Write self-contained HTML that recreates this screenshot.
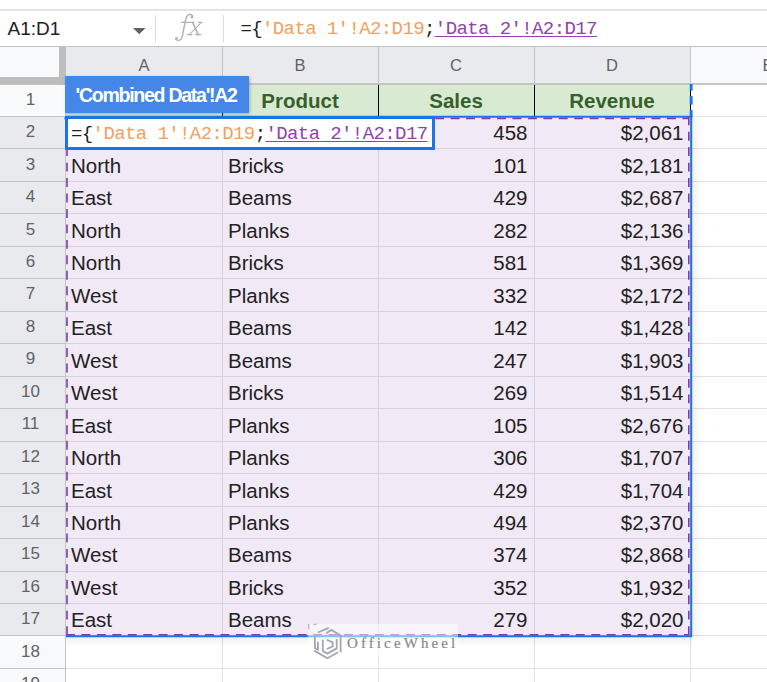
<!DOCTYPE html>
<html><head><meta charset="utf-8"><style>
html,body{margin:0;padding:0;width:767px;height:682px;overflow:hidden;background:#fff}
body>div,body>svg{position:absolute}
.t{position:absolute;height:0;line-height:0;white-space:pre;font-family:"Liberation Sans",sans-serif;color:#000}
.t>span{position:absolute;left:0;bottom:-0.2285em;line-height:normal;display:block}
.mono>span{bottom:-0.3em}
.fx>span,.wm>span{bottom:-0.237em}
.nb{font-size:19px;color:#202124}
.fx{font-family:"Liberation Serif",serif;font-size:31px;color:#b0b3b8}
.mono{font-family:"Liberation Mono",monospace;font-size:19px;letter-spacing:-0.6px;color:#202124}
.o{color:#f5a05a}
.p{color:#8e44ad;text-decoration:underline;text-decoration-thickness:1.3px;text-underline-offset:2px}
.ch{font-size:16.5px;color:#5f6368}
.ch>span,.rh>span,.ctr>span{transform:translateX(-50%)}
.rh{font-size:17px;color:#5f6368}
.hd{font-size:20.5px;font-weight:bold;color:#36602a}
.cell{font-size:20.5px;color:#222}
.rt>span{left:auto;right:0}
.tip{font-size:19.5px;font-weight:bold;color:#fff;letter-spacing:-1.25px}
.wm{font-family:"Liberation Serif",serif;font-size:15px;color:#878b93;letter-spacing:3.1px;-webkit-text-stroke:0.2px #878b93}
</style></head><body>
<div style="left:0px;top:9px;width:767px;height:2px;background:#e3e4e6"></div>
<div style="left:0px;top:46px;width:767px;height:1.5px;background:#c2c2c2"></div>
<div class="t nb" style="left:7.5px;top:36px;"><span>A1:D1</span></div>
<svg style="left:133px;top:28px" width="13" height="7" viewBox="0 0 13 7"><path d="M0 0H12.5L6.25 6.2Z" fill="#5f6368"/></svg>
<div style="left:155px;top:15px;width:1px;height:27px;background:#dadce0"></div>
<svg style="left:170px;top:10px" width="36" height="34" viewBox="170 10 36 34"><g fill="none" stroke="#b3b3b3" stroke-linecap="round"><path d="M192.6 17.4C192.8 15.3 191.6 14.4 190 14.5C187.6 14.7 186.3 16.6 185.7 19.5L182.3 36.2C181.7 39 180.3 40.4 178.3 40.4C176.6 40.4 175.7 39.5 175.8 38.2" stroke-width="1.5"/><path d="M181.2 22.3H193.6M198.3 22.3H202.2M187.3 34.7H191.8M195.3 34.7H200.8" stroke-width="1.2"/><path d="M192.6 22.4L198.3 34.7" stroke-width="1.7"/><path d="M201.2 22.6L189.3 34.6" stroke-width="1.1"/><circle cx="191.8" cy="17.2" r="1.2" fill="#b3b3b3" stroke="none"/><circle cx="176.6" cy="38.3" r="1.2" fill="#b3b3b3" stroke="none"/></g></svg>
<div style="left:223px;top:15px;width:1px;height:27px;background:#dadce0"></div>
<div class="t mono" style="left:240.4px;top:34.8px;"><span>={<span class="o">'Data 1'!A2:D19</span>;<span class="p">'Data 2'!A2:D17</span></span></div>
<div style="left:0px;top:47px;width:767px;height:37px;background:#f8f9fa"></div>
<div style="left:66px;top:47px;width:624px;height:37px;background:#e8eaed"></div>
<div style="left:0px;top:84.0px;width:66px;height:33.47px;background:#f8f9fa"></div>
<div style="left:0px;top:116.47px;width:66px;height:33.47px;background:#e8eaed"></div>
<div style="left:0px;top:148.94px;width:66px;height:33.47px;background:#e8eaed"></div>
<div style="left:0px;top:181.41px;width:66px;height:33.47px;background:#e8eaed"></div>
<div style="left:0px;top:213.88px;width:66px;height:33.47px;background:#e8eaed"></div>
<div style="left:0px;top:246.35px;width:66px;height:33.47px;background:#e8eaed"></div>
<div style="left:0px;top:278.82px;width:66px;height:33.47px;background:#e8eaed"></div>
<div style="left:0px;top:311.28999999999996px;width:66px;height:33.47px;background:#e8eaed"></div>
<div style="left:0px;top:343.76px;width:66px;height:33.47px;background:#e8eaed"></div>
<div style="left:0px;top:376.23px;width:66px;height:33.47px;background:#e8eaed"></div>
<div style="left:0px;top:408.7px;width:66px;height:33.47px;background:#e8eaed"></div>
<div style="left:0px;top:441.16999999999996px;width:66px;height:33.47px;background:#e8eaed"></div>
<div style="left:0px;top:473.64px;width:66px;height:33.47px;background:#e8eaed"></div>
<div style="left:0px;top:506.11px;width:66px;height:33.47px;background:#e8eaed"></div>
<div style="left:0px;top:538.5799999999999px;width:66px;height:33.47px;background:#e8eaed"></div>
<div style="left:0px;top:571.05px;width:66px;height:33.47px;background:#e8eaed"></div>
<div style="left:0px;top:603.52px;width:66px;height:33.47px;background:#e8eaed"></div>
<div style="left:0px;top:635.99px;width:66px;height:33.47px;background:#f8f9fa"></div>
<div style="left:0px;top:668.46px;width:66px;height:33.47px;background:#f8f9fa"></div>
<div style="left:66px;top:84px;width:624px;height:32.47px;background:#d9ead3"></div>
<div style="left:66px;top:116.47px;width:624px;height:519.52px;background:#f1e9f6"></div>
<div style="left:66px;top:116px;width:624px;height:1px;background:#d8d2de"></div>
<div style="left:690px;top:116px;width:77px;height:1px;background:#e2e2e2"></div>
<div style="left:66px;top:148px;width:624px;height:1px;background:#d8d2de"></div>
<div style="left:690px;top:148px;width:77px;height:1px;background:#e2e2e2"></div>
<div style="left:66px;top:181px;width:624px;height:1px;background:#d8d2de"></div>
<div style="left:690px;top:181px;width:77px;height:1px;background:#e2e2e2"></div>
<div style="left:66px;top:213px;width:624px;height:1px;background:#d8d2de"></div>
<div style="left:690px;top:213px;width:77px;height:1px;background:#e2e2e2"></div>
<div style="left:66px;top:246px;width:624px;height:1px;background:#d8d2de"></div>
<div style="left:690px;top:246px;width:77px;height:1px;background:#e2e2e2"></div>
<div style="left:66px;top:278px;width:624px;height:1px;background:#d8d2de"></div>
<div style="left:690px;top:278px;width:77px;height:1px;background:#e2e2e2"></div>
<div style="left:66px;top:311px;width:624px;height:1px;background:#d8d2de"></div>
<div style="left:690px;top:311px;width:77px;height:1px;background:#e2e2e2"></div>
<div style="left:66px;top:343px;width:624px;height:1px;background:#d8d2de"></div>
<div style="left:690px;top:343px;width:77px;height:1px;background:#e2e2e2"></div>
<div style="left:66px;top:376px;width:624px;height:1px;background:#d8d2de"></div>
<div style="left:690px;top:376px;width:77px;height:1px;background:#e2e2e2"></div>
<div style="left:66px;top:408px;width:624px;height:1px;background:#d8d2de"></div>
<div style="left:690px;top:408px;width:77px;height:1px;background:#e2e2e2"></div>
<div style="left:66px;top:441px;width:624px;height:1px;background:#d8d2de"></div>
<div style="left:690px;top:441px;width:77px;height:1px;background:#e2e2e2"></div>
<div style="left:66px;top:473px;width:624px;height:1px;background:#d8d2de"></div>
<div style="left:690px;top:473px;width:77px;height:1px;background:#e2e2e2"></div>
<div style="left:66px;top:506px;width:624px;height:1px;background:#d8d2de"></div>
<div style="left:690px;top:506px;width:77px;height:1px;background:#e2e2e2"></div>
<div style="left:66px;top:538px;width:624px;height:1px;background:#d8d2de"></div>
<div style="left:690px;top:538px;width:77px;height:1px;background:#e2e2e2"></div>
<div style="left:66px;top:571px;width:624px;height:1px;background:#d8d2de"></div>
<div style="left:690px;top:571px;width:77px;height:1px;background:#e2e2e2"></div>
<div style="left:66px;top:603px;width:624px;height:1px;background:#d8d2de"></div>
<div style="left:690px;top:603px;width:77px;height:1px;background:#e2e2e2"></div>
<div style="left:66px;top:635px;width:624px;height:1px;background:#e2e2e2"></div>
<div style="left:690px;top:635px;width:77px;height:1px;background:#e2e2e2"></div>
<div style="left:66px;top:668px;width:624px;height:1px;background:#e2e2e2"></div>
<div style="left:690px;top:668px;width:77px;height:1px;background:#e2e2e2"></div>
<div style="left:221.5px;top:116.47px;width:1px;height:519.52px;background:#d8d2de"></div>
<div style="left:221.5px;top:635.99px;width:1px;height:60px;background:#e2e2e2"></div>
<div style="left:377.5px;top:116.47px;width:1px;height:519.52px;background:#d8d2de"></div>
<div style="left:377.5px;top:635.99px;width:1px;height:60px;background:#e2e2e2"></div>
<div style="left:533.5px;top:116.47px;width:1px;height:519.52px;background:#d8d2de"></div>
<div style="left:533.5px;top:635.99px;width:1px;height:60px;background:#e2e2e2"></div>
<div style="left:689.5px;top:116.47px;width:1px;height:519.52px;background:#d8d2de"></div>
<div style="left:689.5px;top:635.99px;width:1px;height:60px;background:#e2e2e2"></div>
<div style="left:221.5px;top:84px;width:1px;height:32.47px;background:#000"></div>
<div style="left:377.5px;top:84px;width:1px;height:32.47px;background:#000"></div>
<div style="left:533.5px;top:84px;width:1px;height:32.47px;background:#000"></div>
<div style="left:689.5px;top:84px;width:1px;height:32.47px;background:#000"></div>
<div style="left:221.5px;top:47px;width:1px;height:37px;background:#c4c4c4"></div>
<div style="left:377.5px;top:47px;width:1px;height:37px;background:#c4c4c4"></div>
<div style="left:533.5px;top:47px;width:1px;height:37px;background:#c4c4c4"></div>
<div style="left:689.5px;top:47px;width:1px;height:37px;background:#c4c4c4"></div>
<div style="left:0px;top:83.3px;width:767px;height:1.4px;background:#c4c4c4"></div>
<div style="left:0px;top:116px;width:66px;height:1px;background:#c4c4c4"></div>
<div style="left:0px;top:148px;width:66px;height:1px;background:#c4c4c4"></div>
<div style="left:0px;top:181px;width:66px;height:1px;background:#c4c4c4"></div>
<div style="left:0px;top:213px;width:66px;height:1px;background:#c4c4c4"></div>
<div style="left:0px;top:246px;width:66px;height:1px;background:#c4c4c4"></div>
<div style="left:0px;top:278px;width:66px;height:1px;background:#c4c4c4"></div>
<div style="left:0px;top:311px;width:66px;height:1px;background:#c4c4c4"></div>
<div style="left:0px;top:343px;width:66px;height:1px;background:#c4c4c4"></div>
<div style="left:0px;top:376px;width:66px;height:1px;background:#c4c4c4"></div>
<div style="left:0px;top:408px;width:66px;height:1px;background:#c4c4c4"></div>
<div style="left:0px;top:441px;width:66px;height:1px;background:#c4c4c4"></div>
<div style="left:0px;top:473px;width:66px;height:1px;background:#c4c4c4"></div>
<div style="left:0px;top:506px;width:66px;height:1px;background:#c4c4c4"></div>
<div style="left:0px;top:538px;width:66px;height:1px;background:#c4c4c4"></div>
<div style="left:0px;top:571px;width:66px;height:1px;background:#c4c4c4"></div>
<div style="left:0px;top:603px;width:66px;height:1px;background:#c4c4c4"></div>
<div style="left:0px;top:635px;width:66px;height:1px;background:#c4c4c4"></div>
<div style="left:0px;top:668px;width:66px;height:1px;background:#c4c4c4"></div>
<div style="left:64.8px;top:84px;width:1.4px;height:600px;background:#c4c4c4"></div>
<div style="left:0px;top:47px;width:59px;height:30px;background:#f8f9fa"></div>
<div style="left:59px;top:47px;width:7px;height:37.5px;background:#bdbdbd"></div>
<div style="left:0px;top:77.2px;width:66px;height:7.3px;background:#bdbdbd"></div>
<div class="t ch" style="left:144px;top:70.9px;"><span>A</span></div>
<div class="t ch" style="left:300px;top:70.9px;"><span>B</span></div>
<div class="t ch" style="left:456px;top:70.9px;"><span>C</span></div>
<div class="t ch" style="left:612px;top:70.9px;"><span>D</span></div>
<div class="t ch" style="left:768px;top:70.9px;"><span>E</span></div>
<div class="t rh" style="left:30.5px;top:105.8px;"><span>1</span></div>
<div class="t rh" style="left:30.5px;top:138.27px;"><span>2</span></div>
<div class="t rh" style="left:30.5px;top:170.74px;"><span>3</span></div>
<div class="t rh" style="left:30.5px;top:203.21px;"><span>4</span></div>
<div class="t rh" style="left:30.5px;top:235.68px;"><span>5</span></div>
<div class="t rh" style="left:30.5px;top:268.15px;"><span>6</span></div>
<div class="t rh" style="left:30.5px;top:300.62px;"><span>7</span></div>
<div class="t rh" style="left:30.5px;top:333.09px;"><span>8</span></div>
<div class="t rh" style="left:30.5px;top:365.56px;"><span>9</span></div>
<div class="t rh" style="left:30.5px;top:398.03000000000003px;"><span>10</span></div>
<div class="t rh" style="left:30.5px;top:430.5px;"><span>11</span></div>
<div class="t rh" style="left:30.5px;top:462.96999999999997px;"><span>12</span></div>
<div class="t rh" style="left:30.5px;top:495.44px;"><span>13</span></div>
<div class="t rh" style="left:30.5px;top:527.91px;"><span>14</span></div>
<div class="t rh" style="left:30.5px;top:560.3799999999999px;"><span>15</span></div>
<div class="t rh" style="left:30.5px;top:592.8499999999999px;"><span>16</span></div>
<div class="t rh" style="left:30.5px;top:625.3199999999999px;"><span>17</span></div>
<div class="t rh" style="left:30.5px;top:657.79px;"><span>18</span></div>
<div class="t rh" style="left:30.5px;top:690.26px;"><span>19</span></div>
<div class="t hd ctr" style="left:300px;top:108.1px;"><span>Product</span></div>
<div class="t hd ctr" style="left:456px;top:108.1px;"><span>Sales</span></div>
<div class="t hd ctr" style="left:612px;top:108.1px;"><span>Revenue</span></div>
<div class="t cell rt" style="left:527.5px;top:140.67px;"><span>458</span></div>
<div class="t cell rt" style="left:683.5px;top:140.67px;"><span>$2,061</span></div>
<div class="t cell" style="left:71px;top:173.14px;"><span>North</span></div>
<div class="t cell" style="left:228px;top:173.14px;"><span>Bricks</span></div>
<div class="t cell rt" style="left:527.5px;top:173.14px;"><span>101</span></div>
<div class="t cell rt" style="left:683.5px;top:173.14px;"><span>$2,181</span></div>
<div class="t cell" style="left:71px;top:205.60999999999999px;"><span>East</span></div>
<div class="t cell" style="left:228px;top:205.60999999999999px;"><span>Beams</span></div>
<div class="t cell rt" style="left:527.5px;top:205.60999999999999px;"><span>429</span></div>
<div class="t cell rt" style="left:683.5px;top:205.60999999999999px;"><span>$2,687</span></div>
<div class="t cell" style="left:71px;top:238.07999999999998px;"><span>North</span></div>
<div class="t cell" style="left:228px;top:238.07999999999998px;"><span>Planks</span></div>
<div class="t cell rt" style="left:527.5px;top:238.07999999999998px;"><span>282</span></div>
<div class="t cell rt" style="left:683.5px;top:238.07999999999998px;"><span>$2,136</span></div>
<div class="t cell" style="left:71px;top:270.55px;"><span>North</span></div>
<div class="t cell" style="left:228px;top:270.55px;"><span>Bricks</span></div>
<div class="t cell rt" style="left:527.5px;top:270.55px;"><span>581</span></div>
<div class="t cell rt" style="left:683.5px;top:270.55px;"><span>$1,369</span></div>
<div class="t cell" style="left:71px;top:303.02px;"><span>West</span></div>
<div class="t cell" style="left:228px;top:303.02px;"><span>Planks</span></div>
<div class="t cell rt" style="left:527.5px;top:303.02px;"><span>332</span></div>
<div class="t cell rt" style="left:683.5px;top:303.02px;"><span>$2,172</span></div>
<div class="t cell" style="left:71px;top:335.48999999999995px;"><span>East</span></div>
<div class="t cell" style="left:228px;top:335.48999999999995px;"><span>Beams</span></div>
<div class="t cell rt" style="left:527.5px;top:335.48999999999995px;"><span>142</span></div>
<div class="t cell rt" style="left:683.5px;top:335.48999999999995px;"><span>$1,428</span></div>
<div class="t cell" style="left:71px;top:367.96px;"><span>West</span></div>
<div class="t cell" style="left:228px;top:367.96px;"><span>Beams</span></div>
<div class="t cell rt" style="left:527.5px;top:367.96px;"><span>247</span></div>
<div class="t cell rt" style="left:683.5px;top:367.96px;"><span>$1,903</span></div>
<div class="t cell" style="left:71px;top:400.43px;"><span>West</span></div>
<div class="t cell" style="left:228px;top:400.43px;"><span>Bricks</span></div>
<div class="t cell rt" style="left:527.5px;top:400.43px;"><span>269</span></div>
<div class="t cell rt" style="left:683.5px;top:400.43px;"><span>$1,514</span></div>
<div class="t cell" style="left:71px;top:432.9px;"><span>East</span></div>
<div class="t cell" style="left:228px;top:432.9px;"><span>Planks</span></div>
<div class="t cell rt" style="left:527.5px;top:432.9px;"><span>105</span></div>
<div class="t cell rt" style="left:683.5px;top:432.9px;"><span>$2,676</span></div>
<div class="t cell" style="left:71px;top:465.36999999999995px;"><span>North</span></div>
<div class="t cell" style="left:228px;top:465.36999999999995px;"><span>Planks</span></div>
<div class="t cell rt" style="left:527.5px;top:465.36999999999995px;"><span>306</span></div>
<div class="t cell rt" style="left:683.5px;top:465.36999999999995px;"><span>$1,707</span></div>
<div class="t cell" style="left:71px;top:497.84px;"><span>East</span></div>
<div class="t cell" style="left:228px;top:497.84px;"><span>Planks</span></div>
<div class="t cell rt" style="left:527.5px;top:497.84px;"><span>429</span></div>
<div class="t cell rt" style="left:683.5px;top:497.84px;"><span>$1,704</span></div>
<div class="t cell" style="left:71px;top:530.3100000000001px;"><span>North</span></div>
<div class="t cell" style="left:228px;top:530.3100000000001px;"><span>Planks</span></div>
<div class="t cell rt" style="left:527.5px;top:530.3100000000001px;"><span>494</span></div>
<div class="t cell rt" style="left:683.5px;top:530.3100000000001px;"><span>$2,370</span></div>
<div class="t cell" style="left:71px;top:562.78px;"><span>West</span></div>
<div class="t cell" style="left:228px;top:562.78px;"><span>Beams</span></div>
<div class="t cell rt" style="left:527.5px;top:562.78px;"><span>374</span></div>
<div class="t cell rt" style="left:683.5px;top:562.78px;"><span>$2,868</span></div>
<div class="t cell" style="left:71px;top:595.25px;"><span>West</span></div>
<div class="t cell" style="left:228px;top:595.25px;"><span>Bricks</span></div>
<div class="t cell rt" style="left:527.5px;top:595.25px;"><span>352</span></div>
<div class="t cell rt" style="left:683.5px;top:595.25px;"><span>$1,932</span></div>
<div class="t cell" style="left:71px;top:627.72px;"><span>East</span></div>
<div class="t cell" style="left:228px;top:627.72px;"><span>Beams</span></div>
<div class="t cell rt" style="left:527.5px;top:627.72px;"><span>279</span></div>
<div class="t cell rt" style="left:683.5px;top:627.72px;"><span>$2,020</span></div>
<svg style="left:0;top:0" width="767" height="682">
<defs><linearGradient id="sr" x1="0" x2="1"><stop offset="0" stop-color="#000" stop-opacity=".06"/><stop offset="1" stop-color="#000" stop-opacity="0"/></linearGradient><linearGradient id="sb" x1="0" x2="0" y1="0" y2="1"><stop offset="0" stop-color="#000" stop-opacity=".06"/><stop offset="1" stop-color="#000" stop-opacity="0"/></linearGradient></defs>
<rect x="692" y="118" width="10" height="519" fill="url(#sr)"/>
<rect x="66" y="637" width="626" height="10" fill="url(#sb)"/>
<g fill="none" stroke="#7e3bb0" stroke-width="1.6" stroke-dasharray="8.9 6.55">
<path d="M64.4 118.4H689"/><path d="M67 116.3V635.6"/><path d="M688.8 116.3V635.6"/><path d="M66 634.9H689"/></g>
<path d="M66 116.7H691.2V636.3H66" fill="none" stroke="#1a73e8" stroke-width="2"/>
<g fill="#1a73e8"><rect x="689.7" y="84" width="2.9" height="6.6"/><rect x="689.7" y="96.1" width="2.9" height="8.5"/><rect x="689.7" y="109.9" width="2.9" height="7.5"/></g>
</svg>
<div style="left:65px;top:76px;width:183.5px;height:36.5px;background:#4487e8;border-radius:1px;box-shadow:1px 1px 3px rgba(0,0,0,.25)"></div>
<div class="t tip" style="left:75.5px;top:102.6px;"><span>'Combined Data'!A2</span></div>
<div style="left:65px;top:115.6px;width:370px;height:34px;background:#fff;border:3px solid #1a73e8;box-sizing:border-box"></div>
<div class="t mono" style="left:71px;top:138.9px;"><span>={<span class="o">'Data 1'!A2:D19</span>;<span class="p">'Data 2'!A2:D17</span></span></div>
<div style="left:307.6px;top:623.6px;width:150.4px;height:32.4px;background:rgba(255,255,255,.5)"></div>
<svg style="left:305px;top:620px" width="20" height="12" viewBox="305 620 20 12"><g fill="none" stroke="#b9bcc2" stroke-width="1.4"><path d="M308.8 624V629.5"/><path d="M313.5 624.6L316.5 624.3"/></g></svg>
<svg style="left:305px;top:620px" width="45" height="45" viewBox="305 620 45 45"><g fill="none" stroke="#a4a7ad" stroke-width="1.8" stroke-linejoin="miter"><path d="M317.9 632.5L328.7 627.9"/><path d="M326.1 633.2L331.4 629.9L340.6 635.5V652.3"/><path d="M314.9 636.5V648.2L317.9 649.6V641.8"/><path d="M314.2 650.6L327.4 658.3L338 652.3"/><path d="M322.8 639.8V651L327.4 653.6L336.7 648.4V639.1"/><path d="M326.8 639.8L332.7 642.4V646.4L326.8 649"/></g></svg>
<div class="t wm" style="left:347px;top:648.3px;"><span>OfficeWheel</span></div>
</body></html>
